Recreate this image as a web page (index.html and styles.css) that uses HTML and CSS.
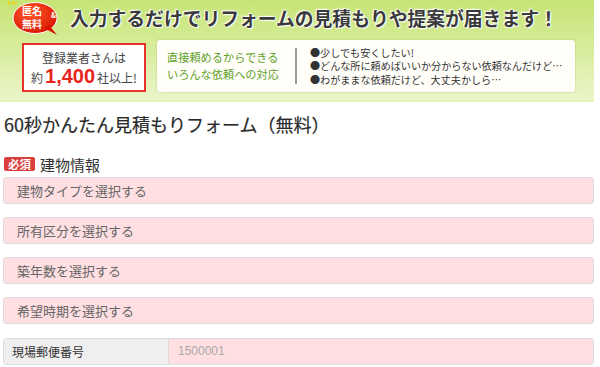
FILE: index.html
```html
<!DOCTYPE html>
<html lang="ja">
<head>
<meta charset="utf-8">
<link rel="stylesheet" href="styles.css">
</head>
<body>
<div class="banner">
  <div class="banner-top">
    <div class="badge">
      <svg class="burst" width="14" height="8" viewBox="0 0 14 8"><path d="M1 0 L5 5 L3 6 Z M7 0 L8 5 L6 5 Z M12 1 L9 6 L8 5 Z" fill="#f5d000"/></svg>
      <svg class="bubble" width="50" height="36" viewBox="0 0 50 36">
        <defs><radialGradient id="rg" cx="40%" cy="35%" r="70%"><stop offset="0" stop-color="#ff5a2a"/><stop offset="1" stop-color="#d81400"/></radialGradient></defs>
        <ellipse cx="24" cy="17" rx="22" ry="15.5" fill="url(#rg)" stroke="#fff" stroke-width="1"/>
        <path d="M33 27 L46 34 L38 24 Z" fill="#d81400"/>
      </svg>
      <div class="badge-text"><span>匿名</span><span>無料</span></div>
      <span class="amp">&amp;</span>
    </div>
    <h1 class="headline">入力するだけでリフォームの見積もりや提案が届きます！</h1>
  </div>
  <div class="banner-bottom">
    <div class="count-box">
      <div class="count-line1">登録業者さんは</div>
      <div class="count-line2">約<span class="count-num">1,400</span>社以上!</div>
    </div>
    <div class="panel">
      <div class="panel-left">直接頼めるからできる<br>いろんな依頼への対応</div>
      <div class="divider"></div>
      <ul class="panel-list">
        <li>●少しでも安くしたい!</li>
        <li>●どんな所に頼めばいいか分からない依頼なんだけど…</li>
        <li>●わがままな依頼だけど、大丈夫かしら…</li>
      </ul>
    </div>
  </div>
</div>
<div class="form">
  <h2 class="form-title">60秒かんたん見積もりフォーム（無料）</h2>
  <div class="section-head"><span class="req">必須</span><span class="section-name">建物情報</span></div>
  <div class="fields">
    <div class="select">建物タイプを選択する</div>
    <div class="select">所有区分を選択する</div>
    <div class="select">築年数を選択する</div>
    <div class="select">希望時期を選択する</div>
    <div class="zip">
      <div class="zip-label">現場郵便番号</div>
      <div class="zip-input">1500001</div>
    </div>
  </div>
</div>
</body>
</html>
```

FILE: styles.css
```css
* { box-sizing: border-box; }
html, body { margin: 0; padding: 0; background: #fff; }
body {
  font-family: "Noto Sans CJK JP", "Noto Sans", sans-serif;
  color: #333;
  width: 600px;
}
.banner {
  width: 594px;
  height: 102px;
  background: linear-gradient(#c6e474 0%, #d6ec98 45%, #e6f3bf 85%, #eaf6c6 100%);
  border-bottom: 2px solid #e6f2b8;
  display: flex;
  flex-direction: column;
}
.banner-top {
  display: flex;
  align-items: flex-start;
  height: 38px;
}
.badge {
  position: relative;
  width: 58px;
  height: 38px;
  margin-left: 4px;
  flex: none;
}
.burst { position: absolute; left: 2px; top: -1px; }
.bubble { position: absolute; left: 7px; top: 1px; }
.badge-text {
  position: absolute;
  left: 18px;
  top: 4px;
  display: flex;
  flex-direction: column;
  color: #fff;
  font-size: 10px;
  line-height: 13px;
  font-weight: bold;
}
.amp {
  position: absolute;
  left: 47px;
  top: 11px;
  color: #fff;
  font-size: 7px;
  line-height: 8px;
  font-weight: bold;
}
.headline {
  margin: 5px 0 0 8px;
  font-size: 18.8px;
  line-height: 26px;
  font-weight: bold;
  color: #3a3a3a;
  white-space: nowrap;
  text-shadow: 0 0 2px #fff, 0 0 2px #fff, 1px 1px 1px #fff, -1px -1px 1px #fff;
}
.banner-bottom {
  display: flex;
  align-items: flex-start;
  padding-left: 22px;
  margin-top: 2px;
}
.count-box {
  width: 124px;
  height: 49px;
  margin-top: 3px;
  background: #fff;
  border: 2px solid #e8332e;
  display: flex;
  flex-direction: column;
  align-items: center;
  flex: none;
}
.count-line1 {
  font-size: 12px;
  line-height: 14px;
  margin-top: 6px;
  color: #444;
}
.count-line2 {
  font-size: 12px;
  line-height: 22px;
  color: #444;
  display: flex;
  align-items: baseline;
}
.count-num {
  font-size: 20px;
  font-weight: bold;
  color: #e8261e;
  margin: 0 2px;
  font-family: "Liberation Sans", "Noto Sans", sans-serif;
}
.panel {
  width: 418px;
  height: 52px;
  margin-left: 11px;
  background: #fffef9;
  border-radius: 3px;
  box-shadow: 0 0 2px rgba(120,140,60,0.45);
  display: flex;
  align-items: center;
  flex: none;
}
.panel-left {
  font-size: 11.2px;
  line-height: 17px;
  color: #62a12a;
  margin-left: 10px;
  width: 125px;
  flex: none;
}
.divider {
  width: 2px;
  height: 36px;
  background: #999;
  margin-left: 3px;
  flex: none;
}
.panel-list {
  list-style: none;
  margin: 0 0 0 13px;
  padding: 0;
  font-size: 10.1px;
  line-height: 13.5px;
  color: #333;
  white-space: nowrap;
}
.form {
  padding-left: 3px;
  width: 597px;
}
.form-title {
  margin: 10px 0 0 1px;
  font-size: 18px;
  line-height: 24px;
  font-weight: normal;
  color: #2a2a2a;
  -webkit-text-stroke: 0.2px #2a2a2a;
}
.section-head {
  display: flex;
  align-items: center;
  margin-top: 19px;
  height: 18px;
}
.req {
  background: #d9403d;
  color: #fff;
  font-weight: bold;
  font-size: 11.5px;
  line-height: 14px;
  padding: 0 4px;
  border-radius: 2px;
  margin-left: 1px;
}
.section-name {
  font-size: 15px;
  margin-left: 5px;
  color: #333;
}
.fields {
  margin-top: 4px;
  display: flex;
  flex-direction: column;
  gap: 13px;
  width: 591px;
}
.select {
  height: 27px;
  background: #ffdfe2;
  border: 1px solid #dcdcdc;
  border-radius: 3px;
  font-size: 13px;
  line-height: 25px;
  color: #666;
  padding-left: 13px;
}
.fields .zip { margin-top: 1px; }
.zip {
  height: 27px;
  display: flex;
  border: 1px solid #dcdcdc;
  border-radius: 3px;
  overflow: hidden;
}
.zip-label {
  width: 165px;
  background: #efefef;
  border-right: 1px solid #dcdcdc;
  font-size: 12px;
  line-height: 25px;
  padding-left: 8px;
  color: #333;
}
.zip-input {
  flex: 1;
  background: #ffdfe2;
  font-family: "Liberation Sans", sans-serif;
  font-size: 12px;
  line-height: 25px;
  color: #aaa;
  padding-left: 9px;
}
```
